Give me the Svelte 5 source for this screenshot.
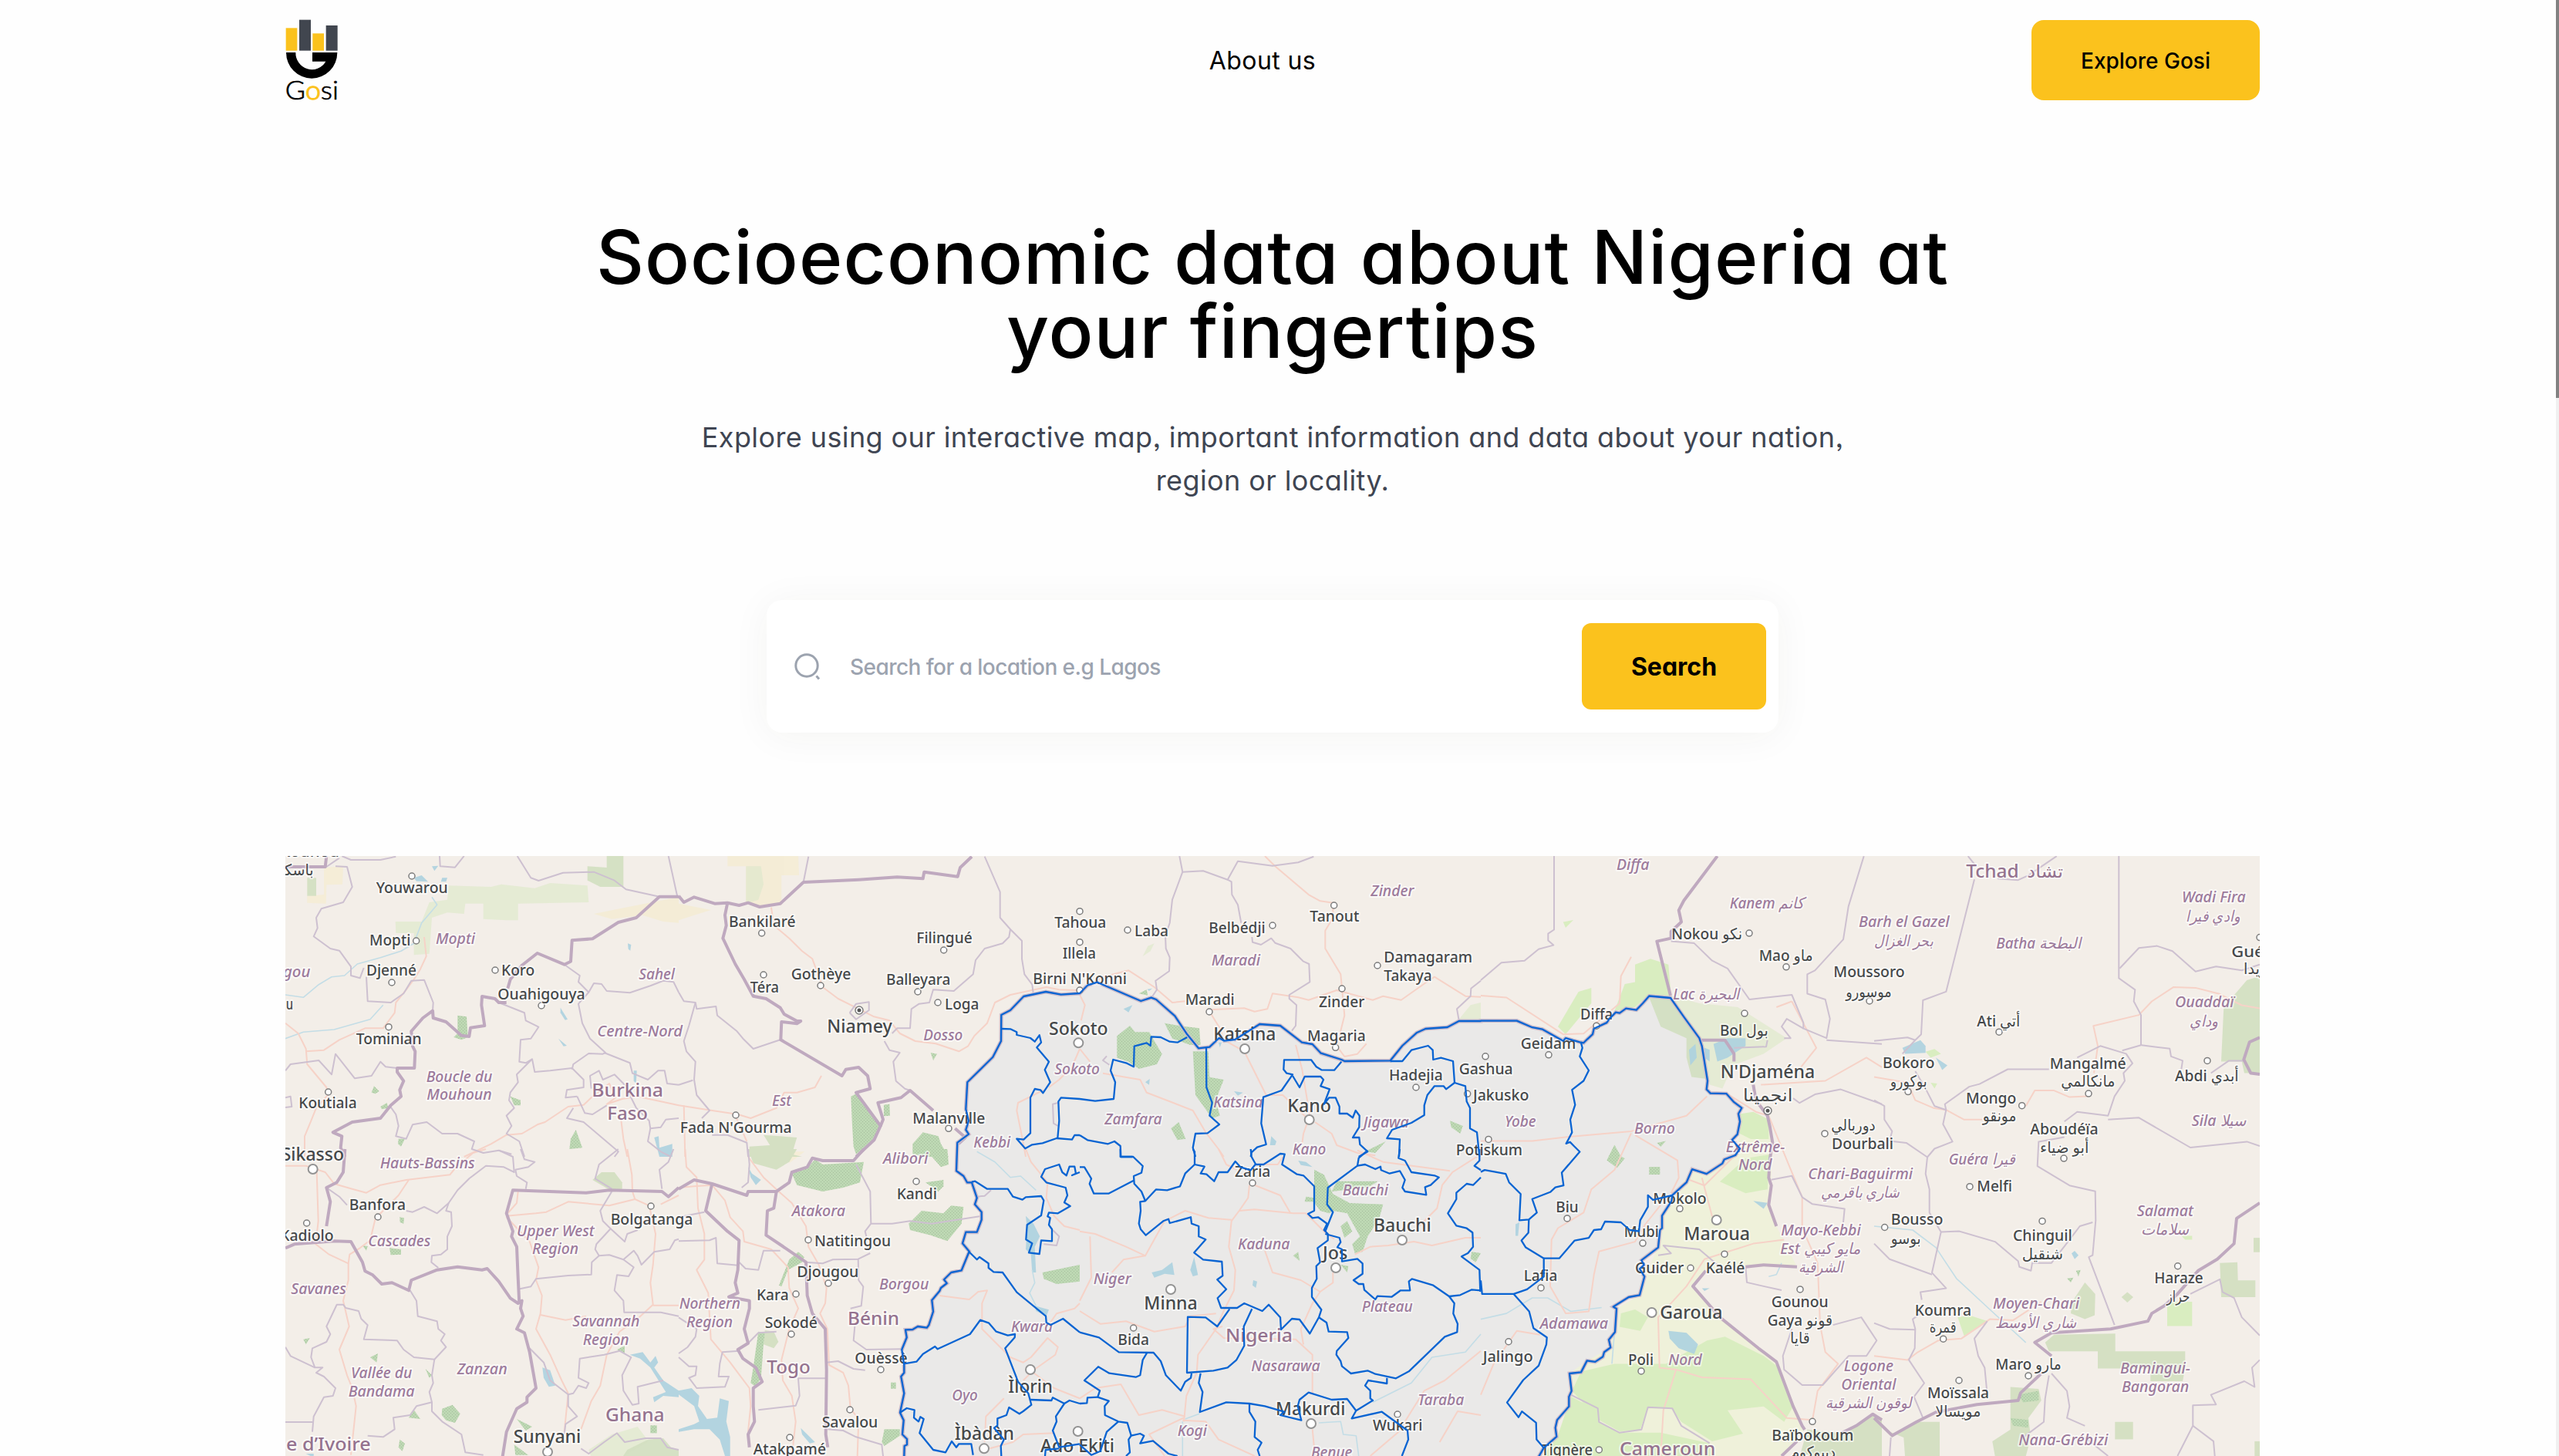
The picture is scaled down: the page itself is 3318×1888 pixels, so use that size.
<script>
  // every tile keeps its own grid: [x, y] is its origin on the page,
  // [sx, sy] the size of one grid unit
  const tiles = [
    {
      x: 360, y: 1100, sx: 1 / 3, sy: 1 / 3,
      sand: ["180,75 255,70 252,140 190,142 188,215 115,212 115,185 180,180", "1230,255 1330,235 1395,222 1560,190 1560,290 1500,285 1420,260 1300,275"],
      meadow: ["665,145 830,150 870,140 1000,155 1060,135 1205,145 1210,210 935,215 935,280 890,280 800,275 800,215 730,215 725,255 660,250 600,270 590,410 530,415 530,330 460,330 458,285 560,285 590,210 660,200"],
      park: ["115,115 150,115 150,185 115,185", "1205,70 1280,75 1280,30 1345,30 1345,150 1255,150 1205,125"],
      forest: ["700,650 735,655 740,735 715,745 685,735 700,720", "905,965 945,980 945,1000 920,1000", "1160,1095 1185,1165 1135,1170 1140,1130", "470,1130 495,1130 480,1160 468,1150", "400,1005 425,990 430,1010 405,1015", "365,950 375,925 395,945 380,955"],
      lakes: ["530,115 560,105 585,130 540,128", "600,70 625,68 610,88", "640,115 660,115 655,130 635,130", "1362,370 1375,375 1372,398 1364,392", "1100,620 1128,665 1118,668 1100,640", "1092,740 1125,768 1112,770", "1385,865 1397,865 1394,915 1385,905", "1465,1125 1482,1120 1485,1165 1535,1150 1535,1200 1485,1200"],
      rivers: ["30,570 100,580 160,530 210,500 260,495 310,450 400,425 480,400 530,370 560,290 620,220 600,190", "30,740 100,715 220,705 360,665 410,610"],
      roads: ["30,680 80,720 110,780 115,840 190,930 195,960 150,1010 130,1060 105,1120 105,1200", "110,790 180,785 240,745 340,700 410,700 455,640 460,600 500,550 530,510 555,470 578,420 570,345", "725,1200 830,1150 890,1115 950,1110 1010,1075 1040,1065 1130,1005 1190,998 1225,965 1290,915 1315,970 1280,995 1340,975 1400,965 1560,1000", "1335,1050 1345,1130 1360,1200"],
      regions: ["250,30 285,45 400,45 460,32", "225,70 270,72 290,150 255,210 170,235 150,270 155,310 140,343 205,390 240,398 285,460 285,495 320,505 335,465", "185,75 240,38", "630,30 632,70 690,74 725,30", "932,30 985,115 1015,126 1110,95 1230,92 1310,125 1355,160 1485,188", "1520,30 1555,188", "345,500 350,595 440,600 490,565 520,515 570,512 605,600 603,632", "1115,452 1175,495 1170,520 1210,560 1230,525 1260,528 1280,555 1370,562 1450,535 1500,515 1540,520 1560,560", "1210,560 1170,605 1185,680 1215,740 1275,795 1265,800 1210,798 1150,840 1145,860", "860,600 960,640 965,670 1015,695 985,740 945,745 940,830 965,835 990,820 1000,870 1060,865 1145,855 1190,900 1190,930 1125,940 1120,970 1165,965", "990,820 930,880 935,910 905,950 900,980 920,1010 890,1040 910,1080 890,1110 940,1140 960,1200", "30,865 50,840 160,825 210,880 225,800 300,895 365,885 400,830 420,850 465,855", "1270,795 1370,835 1380,875 1440,900 1480,865 1505,865 1515,915 1560,920", "1220,935 1215,885 1250,865 1265,900 1310,880 1360,930", "1165,965 1195,1030 1225,1035 1280,1000", "1150,1010 1125,1050 1190,1065 1325,1180 1310,1200", "1360,940 1395,1010 1445,1060 1450,1090 1490,1085 1510,1055 1560,1050", "1450,1090 1440,1140 1490,1180 1530,1200", "435,1000 460,1035 470,1080 460,1120 500,1130 525,1075 580,1065 640,1110 700,1110 765,1140 755,1170 800,1185 860,1175 910,1190", "30,970 50,965 55,1005 30,1008"],
      borders: ["1560,188 1485,188 1395,270 1325,288 1225,352 1145,358 1140,440 1115,452 1010,408 950,455 905,510 895,545", "890,600 860,600 845,585 795,576 793,610 805,690 750,698 745,732 715,728 655,675 605,660 603,632 565,660 520,712 525,770 535,790 532,855 465,855 465,870 490,905 475,940 480,965 440,1000 400,1050 290,1065 215,1105 250,1120 245,1165 262,1200", "30,72 185,72 190,30"],
      labels: [
        ["Kounou", 10, 240, 34, "town"], ["باسكـ", 10, 140, 105, "town"],
        ["Youwarou", 383, 662, 173, "town"], ["Mopti", 357, 517, 378, "town"], ["Djenné", 345, 540, 496, "town"],
        ["Koro", 870, 1000, 496, "town"], ["Ouahigouya", 856, 1196, 588, "town"], ["u", 32, 60, 628, "town"],
        ["Tominian", 305, 560, 762, "town"], ["Koutiala", 82, 308, 1012, "town"],
        ["Mopti", 615, 768, 372, "region"], ["Ségou", -42, 127, 502, "region"], ["Sahel", 1405, 1545, 510, "region"],
        ["Centre-Nord", 1243, 1575, 732, "region"], ["Boucle du", 578, 835, 908, "region"], ["Mouhoun", 580, 833, 977, "region"],
        ["Burkina", 1222, 1500, 965, "country"], ["Faso", 1282, 1440, 1055, "country"],
      ],
      dots: [[522, 108], [539, 360], [444, 522], [846, 474], [1026, 612], [432, 695], [197, 948]],
    },
    {
      x: 360, y: 1490, sx: 1 / 3, sy: 1 / 3,
      meadow: ["1210,1170 1300,1110 1400,1080 1430,1120 1440,1140 1370,1180 1340,1200 1220,1200"],
      park: ["1225,120 1260,90 1310,90 1340,130 1340,155 1290,158", "1360,1170 1440,1130 1500,1125 1530,1160 1560,1170 1560,1200 1340,1200"],
      forest: ["435,385 480,390 480,410 440,412", "330,375 350,378 345,395", "100,740 125,735 110,760", "360,810 390,795 385,830", "640,1010 680,995 710,1030 690,1065 655,1055 638,1035", "510,1045 530,1015 555,1050", "475,1130 495,1145 485,1175 470,1160", "575,855 600,880 590,890", "1320,780 1350,765 1350,795", "930,1050 990,1080 965,1095", "920,1150 975,1190 925,1190", "1450,1075 1475,1075 1475,1105 1450,1105", "475,265 492,268 490,290 476,285"],
      lakes: ["1030,850 1060,860 1080,920 1055,925 1035,890", "1370,800 1420,790 1450,830 1470,805 1480,830 1465,850 1500,900 1560,940 1560,965 1500,960 1465,985 1460,965 1510,945 1450,850 1410,815", "110,1185 140,1185 140,1200"],
      roads: ["30,65 110,65 185,90 220,135 290,155 345,170 400,140 500,120 670,100 690,75 760,15 810,0", "152,90 158,280 148,370 200,410 275,445 280,410 320,385 360,355 380,270 470,180 510,120", "275,445 275,510 255,590 278,690 240,780 270,880 290,930 305,1000 285,1190", "1360,0 1378,100 1380,165 1390,195 1445,220", "890,260 1005,250 1045,245 1130,205 1290,220 1390,195", "890,265 980,360 1015,460 1005,510 1028,570 1022,640 1005,700 1060,800 1105,900 1130,950 1115,1100", "1022,645 1120,665 1200,650", "1445,220 1470,330 1460,450 1450,520 1460,605 1400,660 1330,710 1280,800 1255,920 1220,980 1180,1090", "1460,608 1560,608", "1490,215 1560,180", "935,165 930,210 895,250"],
      regions: ["190,150 240,185 270,218", "500,240 525,245 570,225 620,250 665,210 700,160 745,115 810,65 880,70 920,90 915,30 860,5", "665,210 655,240 675,245 678,300 660,340 660,390 635,410 600,415 598,440 625,462", "945,0 960,40 1000,50 975,70 925,80 930,105 970,130 965,155", "1325,0 1250,60 1235,115 1300,155", "1300,165 1255,240 1265,280 1295,310 1240,370 1235,390 1250,415 1222,440 1220,488 1130,492 1005,505 985,535 935,545", "1295,310 1350,360 1360,330 1400,315", "1250,415 1290,412 1345,430 1385,395 1400,415 1415,450 1465,400 1525,390 1545,355 1560,350", "1345,430 1385,460 1365,495 1320,490 1310,550 1345,590 1348,635 1490,635 1560,650", "1540,0 1520,50 1485,80 1495,155", "515,550 540,590 545,650 620,670 625,700 650,720 635,745 655,770 610,818 530,810 490,780 465,745 335,740 350,685 325,660 315,630 265,618 255,605 230,605 190,690 205,720 190,750 135,775 130,810 145,850 175,850 150,870 180,885 225,930 215,960 180,965 140,1040 135,1100", "30,770 50,805 145,850", "610,818 600,880 605,910 590,945 600,985 540,1000 515,1035 450,1045 455,1090 410,1120 350,1115", "600,985 600,1020 640,1060 715,1110 730,1180 800,1190", "30,1062 135,1062", "980,775 1035,830 1060,900 1130,955 1130,1000 1165,1040 1120,1070 1115,1110", "1130,955 1150,950 1170,920 1200,930 1210,910 1170,890 1175,815 1270,800 1330,785 1375,810 1340,880 1345,940 1380,995 1405,990 1400,925 1500,900", "1180,1165 1210,1185 1270,1140 1320,1105 1350,1140 1430,1125 1490,1125 1515,1160 1560,1170"],
      borders: ["262,0 255,90 230,130 190,150 205,205 190,300", "30,385 65,370 220,358 285,360 330,440 340,475 370,490 405,525 445,520 510,550 520,510 620,470 700,458 795,470 815,465 860,515 905,580 935,600 950,590 945,620 955,650 930,700 960,715 980,790 1005,930 970,965 970,985 930,1010 890,1100 875,1195", "940,600 935,500 930,380 910,340 915,320 890,250 915,160 1200,170 1290,160 1495,165 1520,185 1560,150"],
      labels: [
        ["Sikasso", 14, 258, 45, "city"], ["Kadiolo", 10, 218, 358, "town"], ["Banfora", 278, 498, 238, "town"],
        ["Bolgatanga", 1295, 1615, 294, "town"], ["Sunyani", 917, 1180, 1143, "city"],
        ["Hauts-Bassins", 398, 767, 75, "region"], ["Cascades", 352, 595, 377, "region"], ["Upper West", 930, 1232, 338, "region"],
        ["Region", 990, 1170, 408, "region"], ["Savanes", 52, 267, 563, "region"], ["Vallée du", 285, 523, 890, "region"],
        ["Bandama", 275, 533, 962, "region"], ["Zanzan", 698, 893, 876, "region"], ["Savannah", 1147, 1408, 690, "region"],
        ["Region", 1187, 1367, 762, "region"], ["Ghana", 1275, 1505, 1060, "country"], ["e d’Ivoire", 33, 362, 1172, "country"],
      ],
      dots: [[137, 78, 6], [113, 288], [390, 264], [1452, 222], [1050, 1178, 6]],
    },
    {
      x: 880, y: 1100, sx: 1 / 3, sy: 1 / 3,
      sand: ["190,30 465,30 468,105 400,105 400,220 320,225 262,215 262,70 190,70", "0,215 125,240 60,260 0,280"],
      meadow: ["262,70 320,70 330,140 310,200 262,215"],
      park: ["330,1115 460,1125 440,1190 480,1200 275,1200 275,1160 355,1155"],
      forest: ["670,965 690,955 785,1080 750,1140 690,1190 680,1160 675,1080", "798,998 820,995 822,1040 798,1042", "910,1150 950,1105 1010,1120 1020,1150 1050,1200 960,1200 910,1190", "980,795 1005,800 990,825"],
      roads: ["360,230 370,300 430,350 480,400 520,430 560,540 620,585 690,620 760,655 820,670 860,720 920,750 1000,760 1090,790 1125,770 1150,730 1200,680 1230,600 1290,570 1430,540 1480,550 1560,553", "0,1000 130,1020 230,1035 280,1050 380,1010 410,950 460,950 530,930 555,885", "20,1000 25,1200", "225,1050 265,1140", "1420,940 1320,990 1315,1020 1335,1120 1350,1200", "1560,780 1530,850 1480,900 1440,930"],
      regions: ["505,32 485,132", "1190,32 1250,170 1250,270 1290,315 1285,345 1260,370 1190,390 1155,435 1145,490 1070,555 990,550 975,600 935,605 905,625 900,700 850,700 830,720", "1290,315 1335,360 1335,430 1345,490 1375,530 1380,570", "0,560 20,595 65,600 70,625 145,615 150,650 225,710 250,740 290,780 395,745", "65,600 40,690 20,750 30,790 65,830 60,900 70,960 120,1020 90,1050", "0,920 55,902", "800,750 820,785 860,795 835,830 845,905 880,935 900,942", "665,640 690,605 740,598 740,630 690,665 665,640", "130,1115 190,1115 265,1145 270,1200", "1475,990 1455,995 1458,1070 1475,1080"],
      borders: ["0,185 20,210 60,190 140,215 190,212 235,222 270,212 315,228 395,215 485,132 700,122 850,112 950,118 955,92 1085,110 1095,75 1140,32", "190,212 180,260 185,300 172,350 220,450 255,510 290,575 340,585 395,620 410,645 460,672 475,672 460,682 400,675 397,745 635,885 650,860 700,852 735,885 745,935 690,950 785,1080 760,1135 690,1200", "785,1080 795,1055 775,990 865,970 900,942 990,1020", "1075,1090 1115,1125 1088,1150"],
      labels: [
        ["Bankilaré", 195, 455, 305, "town"], ["Téra", 278, 390, 562, "town"], ["Gothèye", 437, 670, 510, "town"],
        ["Filingué", 925, 1142, 370, "town"], ["Balleyara", 807, 1057, 530, "town"], ["Loga", 1035, 1168, 627, "town"],
        ["Niamey", 577, 830, 718, "city"], ["Tahoua", 1462, 1663, 308, "town"], ["Illela", 1493, 1623, 430, "town"],
        ["Birni N'Konni", 1378, 1743, 528, "town"], ["Sokoto", 1440, 1670, 725, "city"], ["Malanville", 910, 1192, 1070, "town"],
        ["Fada N'Gourma", 5, 440, 1107, "town"], ["Dosso", 952, 1105, 748, "region"], ["Est", 363, 438, 1003, "region"],
        ["Kebbi", 1147, 1290, 1165, "region"], ["Sokoto", 1462, 1638, 880, "region"],
      ],
      dots: [[323, 330], [330, 492], [552, 534], [1031, 396], [930, 558], [1008, 600], [702, 630, 5, true], [1050, 1090], [222, 1038], [1560, 245], [1560, 365], [1560, 552], [1555, 757, 6]],
      states: ["1255,702 1290,703 1315,715 1315,726 1368,738 1385,752 1403,727 1410,755 1393,775 1440,830 1424,862 1445,910 1417,952 1407,940 1385,936 1368,970 1368,1108 1342,1133 1315,1130 1348,1168 1375,1153 1415,1147 1470,1128 1530,1133 1540,1116 1560,1116", "1560,975 1487,970 1477,985 1480,1060 1474,1128"],
    },
    {
      x: 880, y: 1490, sx: 1 / 3, sy: 1 / 3,
      sand: ["430,10 490,10 430,55"],
      park: ["335,705 370,710 388,750 370,775 330,760", "270,0 460,0 430,50 380,80 290,55"],
      forest: ["440,95 500,75 530,40 560,60 720,50 705,130 640,150 560,165 460,140", "910,0 1045,0 1050,60 1020,70 985,30 915,15", "960,130 1030,120 1030,145 1010,165", "895,290 945,240 1030,250 1060,220 1108,225 1100,290 1045,358 980,335 900,315", "430,430 465,400 488,420 480,440 425,470 400,535 390,530", "310,710 335,715 330,760 320,890 300,925 280,910 290,850", "1415,480 1560,450 1560,515 1470,525 1420,505", "800,1090 860,1090 860,1115 800,1155 790,1140", "825,908 845,908 845,932 825,932"],
      lakes: ["0,940 50,930 80,960 75,1000 110,1050 150,1045 160,970 195,980 185,1060 200,1120 200,1194 180,1194 160,1130 120,1090 60,1090 0,1100 0,1090 60,1070 80,1060 60,1000 0,955", "1350,260 1380,290 1405,340 1385,380 1390,480 1375,480 1370,410 1350,390 1355,310", "270,70 285,95 320,120 300,140 280,110", "475,1085 500,1110 530,1140 510,1145 480,1110", "1385,610 1440,625 1430,650 1390,630"],
      rivers: ["1375,470 1385,520 1365,560 1390,610", "1160,10 1230,50 1290,110 1330,105 1390,160"],
      roads: ["25,0 30,70 70,110 75,230 100,330 100,430 70,470 115,560 125,740 200,830 275,930 280,1000 270,1100", "130,140 180,200 200,265 250,320 255,360 360,390 425,460 430,540 465,620 430,700 400,820 405,900 440,960 455,1060 440,1194", "270,30 330,110 395,170 440,210 495,300 505,380 545,450 575,540 570,600 550,640 578,700 585,840 640,870 660,920 668,1010 700,1050 695,1194", "0,150 60,145 130,140", "1350,0 1370,50 1435,130 1430,190 1460,260 1500,300 1560,315", "1015,570 1130,585 1165,555 1200,550 1180,600 1180,700 1230,750 1290,810 1340,830 1370,810 1435,735 1475,770 1465,800 1380,860 1340,900", "1435,690 1470,640 1540,620 1560,600", "1190,1140 1195,1040 1265,970", "1210,1165 1300,1140 1340,1110 1460,1105", "1380,870 1460,930 1560,970"],
      regions: ["690,60 745,165 748,290 725,320 730,340", "748,290 830,290 900,280 985,290 1170,262", "495,440 560,445 600,430 698,428 745,405", "698,428 700,510 718,535 710,610 668,620", "685,690 680,745 730,780 870,778", "575,830 620,825 680,855 725,860", "570,892 465,892 470,960 455,998 310,1015", "580,1090 640,1095 690,1120 790,1150 795,1194", "0,358 120,355 145,345 150,445 230,452", "235,440 260,465 310,470 330,395 395,395", "0,655 70,700 65,730 35,770 0,795", "0,810 40,845 70,845 65,880 40,890 70,930 180,925 195,885 155,885 160,835 170,790 235,785", "270,755 310,715 380,710", "270,0 275,60 270,130 245,150", "0,265 100,245", "1160,185 1190,182 1215,160", "1455,315 1480,340 1470,375 1420,370"],
      borders: ["720,0 680,45 560,45 520,35 500,70 440,90 430,130 380,165 270,165 265,180 130,135 60,120 0,155", "380,165 370,230 345,240 340,335 400,375 495,440 500,570 520,640 570,700 575,860 572,1110 580,1160", "130,135 105,240 190,320 235,355 230,470 220,520 230,560 195,575 275,590 275,620 255,700 270,755 230,780 250,815 300,850 325,905 290,930 290,1000 295,1060 270,1110 275,1160"],
      labels: [
        ["Kandi", 848, 1005, 195, "town"], ["Natitingou", 528, 825, 378, "town"], ["Djougou", 460, 700, 497, "town"],
        ["Kara", 303, 428, 587, "town"], ["Sokodé", 335, 540, 697, "town"], ["Ouèssè", 685, 890, 833, "town"],
        ["Savalou", 557, 775, 1082, "town"], ["Atakpamé", 290, 573, 1188, "town"], ["Ìlọrin", 1282, 1455, 948, "city"],
        ["Ìbàdàn", 1073, 1305, 1132, "city"], ["Ado Ekiti", 1407, 1695, 1180, "city"], ["Alibori", 795, 970, 58, "region"],
        ["Atakora", 440, 648, 262, "region"], ["Borgou", 780, 973, 545, "region"], ["Kwara", 1293, 1455, 712, "region"],
        ["Oyo", 1063, 1163, 977, "region"], ["Northern", 2, 240, 622, "region"], ["Region", 30, 210, 692, "region"],
        ["Bénin", 657, 858, 683, "country"], ["Togo", 343, 512, 873, "country"],
      ],
      dots: [[924, 126], [504, 353], [582, 522], [456, 564], [438, 720], [786, 858], [666, 1014], [432, 1122], [1368, 858, 6], [1188, 1165, 6], [1553, 1098, 6]],
      states: ["1140,128 1153,125 1200,155 1280,155 1300,185 1337,197 1350,187 1410,183 1420,200 1410,258 1355,295 1351,352 1375,367 1362,403 1403,408 1410,355 1452,358 1452,312 1440,295 1445,268 1435,262 1440,247 1475,250 1523,222 1500,208 1512,180 1505,150 1430,130 1410,108 1425,78 1480,60 1492,90 1508,103 1520,68 1540,68 1545,95 1530,102 1560,90", "1128,398 1160,430 1170,420 1205,445 1205,462 1225,478 1260,480 1315,557 1428,650 1430,675 1447,684 1495,660 1560,713", "877,835 925,827 950,797 997,768 1007,778 1133,720 1173,665 1207,677 1235,710 1280,725 1308,720 1307,733 1270,775 1320,905 1360,950 1372,995 1340,1020 1325,1030 1285,1005 1275,1035 1240,1048 1240,1075 1227,1085 1265,1130 1253,1155 1255,1194", "1368,975 1450,978 1455,967 1500,990 1520,978 1560,990", "1500,990 1467,1040 1470,1060 1455,1095 1480,1160 1560,1147", "1480,1165 1427,1170 1425,1194", "861,1025 887,1008 917,1015 915,1045 933,1060 940,1042 953,1050 937,1105 990,1170 1038,1180 1062,1137 1080,1160 1090,1147 1138,1147 1145,1190"],
    },
    {
      x: 1400, y: 1100, sx: 1 / 3, sy: 1 / 3,
      meadow: ["245,420 265,380 290,370 275,400", "1475,665 1520,610 1560,600 1560,665"],
      forest: ["145,730 195,690 215,715 270,715 320,800 300,840 230,858 190,830 145,815", "330,680 385,690 465,700 470,765 430,765 360,740", "440,790 500,790 505,890 560,900 540,950 530,985 545,1040 515,1050 450,960", "355,1090 385,1065 412,1130 380,1135", "230,565 260,550 265,572", "1110,1180 1190,1140 1150,1185", "1440,1060 1490,1080 1480,1110 1445,1085"],
      lakes: ["170,625 205,610 190,638", "255,910 272,897 270,920", "600,945 635,950 615,962", "745,1120 765,1140 760,1155 740,1155", "262,548 282,545 270,555", "540,755 552,755 545,775"],
      roads: ["720,30 760,70 890,180 935,205 985,212 985,270 955,320 955,390 1015,490 1020,545 1030,650 1000,770 1030,810 1080,800 1115,760", "0,553 90,500 190,475 290,540 360,600 410,595", "505,628 640,622 680,635 730,625 750,565 850,580 890,590 1000,552 1140,590 1180,575 1250,590 1350,520 1380,500 1500,575 1560,578", "505,635 545,700 560,745 640,790 680,870 725,960 790,960 890,1055", "0,780 40,830", "90,875 235,900 260,950 350,985 440,1020 490,1105 540,1170 560,1200", "840,765 865,860 895,1040 870,1110 865,1150", "915,1065 980,1110 1000,1155 1080,1185 1150,1195", "0,570 20,610 5,670"],
      regions: ["388,30 400,92 480,88 575,122 615,50 750,68 850,55 910,32", "400,92 360,200 350,290 333,340 335,390 350,425 348,478 295,515 300,550 280,580", "575,122 590,130 592,180 615,220 628,290", "670,345 672,365 705,375 745,350 760,368 820,390 870,440 892,450 895,520 815,570 815,585 843,610 840,690 825,710", "1560,515 1522,545 1520,575 1467,625 1475,670", "105,808 90,825 115,842"],
      labels: [
        ["Laba", 213, 345, 342, "town"], ["Belbédji", 502, 722, 330, "town"], ["Tanout", 895, 1087, 286, "town"],
        ["Damagaram", 1183, 1527, 443, "town"], ["Takaya", 1183, 1370, 515, "town"], ["Maradi", 410, 602, 608, "town"],
        ["Zinder", 930, 1108, 618, "town"], ["Magaria", 885, 1112, 750, "town"], ["Katsina", 520, 763, 748, "city"],
        ["Hadejia", 1203, 1412, 903, "town"], ["Kano", 808, 978, 1025, "city"], ["Gashua", 1475, 1685, 880, "town"],
        ["Jakusko", 1530, 1747, 980, "town"], ["Potiskum", 1463, 1722, 1195, "town"], ["Zinder", 1132, 1300, 185, "region"],
        ["Maradi", 512, 702, 455, "region"], ["Zamfara", 97, 320, 1075, "region"], ["Katsina", 520, 712, 1008, "region"],
        ["Jigawa", 1103, 1280, 1085, "region"], ["Kano", 827, 958, 1190, "region"],
      ],
      dots: [[186, 318], [750, 300], [989, 222], [1158, 456], [504, 636], [1020, 546], [995, 775], [1308, 930], [642, 780, 6], [893, 1056, 6], [1508, 955]],
      states: ["0,1116 30,1135 110,1150 135,1140 158,1158 160,1200 205,1200", "450,1200 440,1165 450,1110 497,1108 543,1074 505,1040 515,990 493,930 492,776", "418,735 380,755 350,752 315,735 278,733 275,768 260,757 212,770 210,850 180,835 130,822 120,865 138,910 132,975 60,983 0,975", "665,1200 668,1183 690,1163 725,1152 706,1070 714,968 785,942 828,880 805,875 793,860 795,823 900,823 920,850 940,862 990,863 1018,830", "828,885 855,930 875,888 937,888 948,900 937,925 972,937 950,995 970,970 995,970 1010,1005 1010,1032 1040,1032 1062,1048 1073,1020 1088,1040 1087,1085 1062,1125 1087,1125 1090,1152 1120,1180 1085,1200", "1242,1200 1245,1132 1195,1128 1215,1095 1290,1068 1340,1038 1340,1000 1352,960 1380,925 1415,925 1425,937 1458,912 1500,925 1505,985 1518,1010 1518,1090 1545,1105 1555,1200", "1458,912 1452,828 1405,815 1375,822 1373,785 1355,768 1290,785 1255,828 1208,828"],
    },
    {
      x: 1400, y: 1490, sx: 1 / 3, sy: 1 / 3,
      forest: ["912,80 950,100 985,175 1050,210 1180,215 1165,270 1120,340 1100,400 1070,405 1060,370 1090,340 1040,250 985,240 970,250 935,240 910,205 875,205 880,185 912,190", "1015,300 1040,280 1060,320 1030,345", "1000,125 1160,125 1120,150 980,165", "830,415 850,400 855,435", "1015,450 1045,455 1040,480", "1525,400 1560,405 1540,440 1520,425"],
      lakes: ["280,480 320,470 360,440 368,490 330,485 290,500", "430,470 445,420 460,490 440,495", "675,510 690,515 685,540 672,530", "850,45 880,50 905,70 860,62"],
      rivers: ["1140,985 1290,910 1370,810 1500,790 1560,720", "410,1050 465,1030", "400,1060 400,1194", "930,1065 1015,1060 1025,1110 1075,1115 1085,1194"],
      roads: ["660,140 655,190 620,240 590,280 580,380 605,470 600,550 555,640 530,700 460,800 455,870 415,960 405,1060", "680,140 780,180 820,250", "620,240 680,235 830,250 880,250 960,330 990,350", "590,275 500,268 410,240 330,280 255,415 180,380 60,330 0,320", "40,340 45,500 0,590", "255,415 170,430 125,480", "0,630 80,680 180,670 290,710 410,690 430,650 530,640", "555,690 520,700 560,735 840,740 905,800 905,950", "720,395 750,480 860,510 935,555 985,520 985,480", "935,555 905,600 860,700 870,760", "1070,410 1130,380 1200,375 1300,360 1370,375 1500,345 1560,345", "1320,300 1390,230 1410,140 1450,90 1560,20", "1080,5 1180,50 1440,85", "0,970 60,930 160,915 230,1035 320,1015 410,1040", "405,1045 270,1110 330,1194", "400,1055 490,1060 540,1130 680,1194", "905,1090 915,1194", "1130,1194 1240,1100 1340,940 1420,900 1560,785", "1400,1140 1470,1020 1560,1035", "700,60 770,60 790,30", "540,0 570,60 610,80"],
      labels: [
        ["Zaria", 603, 742, 107, "town"], ["Bauchi", 1143, 1367, 320, "city"], ["Jos", 945, 1042, 430, "city"],
        ["Minna", 250, 458, 625, "city"], ["Bida", 148, 270, 763, "town"], ["Makurdi", 762, 1033, 1035, "city"],
        ["Wukari", 1140, 1333, 1095, "town"], ["Bauchi", 1022, 1200, 180, "region"], ["Kaduna", 615, 817, 390, "region"],
        ["Niger", 53, 200, 525, "region"], ["Plateau", 1097, 1295, 633, "region"], ["Nasarawa", 667, 935, 865, "region"],
        ["Taraba", 1315, 1495, 997, "region"], ["Kogi", 380, 495, 1115, "region"], ["Benue", 900, 1060, 1200, "region"],
        ["Nigeria", 567, 828, 750, "country"],
      ],
      dots: [[672, 132], [1254, 354, 6], [996, 462, 6], [354, 546, 6], [209, 696], [900, 1068, 6], [1236, 1032]],
      states: ["0,70 18,70 45,115 38,135 55,173 112,173 210,122", "158,0 158,30 208,30 245,66 240,92 210,105 212,135 240,165 255,202 235,205 237,240 230,290 237,312 257,335 325,280 345,272 350,288 432,265 435,290 463,300 463,340 490,352 445,403 480,430 553,438 556,493 535,508 570,545 536,580 550,618 612,618 640,600 710,630 735,605 780,655 783,702 825,660 855,663 895,718 930,655 940,625 903,575 903,540 922,505 920,455 935,440 925,385 965,355 965,330 950,315 962,290 927,265 905,268 888,252 912,240 912,145 870,103 845,98 787,60 797,20 780,18 715,60 683,60 665,82 625,70 605,48 575,90 540,90 523,125 493,98 470,95 485,68 447,60 447,10 440,0", "447,60 410,95 390,145 340,160 297,157 255,202", "665,0 668,30 685,60", "1120,5 1085,35 1080,65 965,150 962,215 985,245 955,320", "1080,65 1110,60 1150,78 1170,68 1172,82 1205,95 1245,85 1265,120 1255,150 1265,165 1348,178 1343,148 1365,140 1397,110 1380,103 1290,90 1265,45 1240,35 1245,0", "1555,0 1555,45 1535,65 1560,82", "1560,110 1530,140 1505,135 1465,170 1465,195 1432,250 1465,298 1505,308 1528,325 1530,380 1510,405 1485,418 1555,470 1558,555", "955,330 1010,345 1015,362 1002,382 1020,390 1020,437 1080,427 1100,445 1100,485 1065,510 1085,525 1103,525 1107,548 1150,585 1158,572 1213,575 1248,550 1285,550 1280,515 1292,505 1375,530 1437,573 1480,568 1525,547 1560,550", "1437,573 1457,600 1453,640 1470,680 1468,712 1420,730 1280,865 1230,892 1150,875 1120,862 1055,873 1020,845 1015,825 998,800 1000,785 1045,735 1040,712 968,710 960,675 930,655", "1195,890 1195,912 1122,900 1110,920 1130,940 1130,970 1140,978 1075,1018 1058,1048 1175,1022 1275,1095 1278,1130 1253,1194", "1075,1018 1040,972 980,975 890,947 855,975 848,1000 862,1055 780,1035 795,1022 720,1000 660,990 570,985 467,1023 478,945 463,910 470,872", "660,990 660,1022 683,1060 680,1120 707,1142 692,1170 700,1194", "583,622 535,690 490,655 420,653 417,870 520,862 575,850 610,820 640,765 638,690 670,622", "0,713 75,733 152,790 287,792 315,825 335,880 393,940 410,905 432,890 435,872", "262,792 245,820 235,880 218,887 115,872 72,847 18,900 78,940 70,965 113,980 97,1000 98,1035 150,1060 185,1065 200,1115 235,1107 250,1115 235,1145 285,1135 345,1185 380,1194", "70,965 30,967 28,988 0,990", "150,1060 105,1100 80,1175 45,1190 0,1150", "200,1115 190,1130 195,1180 180,1194"],
    },
    {
      x: 1920, y: 1100, sx: 1 / 3, sy: 0.50255,
      savanna: ["822,830 878,840 1000,790 1010,690 1060,680 1120,700 1135,760 1125,920 1150,975 1230,1080 1030,1080 875,1090 825,1130 930,1210 1080,1290 1150,1325 1260,1500 1170,1570 225,1570 295,1518 343,1440 345,1355 413,1322 505,1288 528,1188 618,1153 637,1105 690,1030 705,948 745,895"],
      meadow: ["740,380 850,400 1000,410 1190,490 1100,530 980,560 940,620 890,610 860,510 790,435"],
      grass: ["600,300 660,285 730,300 740,380 650,380 600,410 520,420 560,350 600,345", "300,460 380,370 430,360 430,400 330,480", "320,190 360,185 330,205", "1010,685 1060,680 1120,700 1120,750 1050,750 1005,735", "930,860 1030,800 1125,790 1115,880 1030,890", "545,1200 600,1190 650,1210 620,1245 540,1235", "355,1400 390,1350 520,1330 720,1330 880,1270 950,1260 1100,1310 1160,1340 1215,1440 1180,1480 1100,1440 960,1450 1020,1510 900,1530 780,1480 740,1445 650,1445 620,1500 540,1505 460,1475", "350,1415 455,1450 460,1480 540,1508 700,1508 890,1535 900,1570 240,1570 300,1515"],
      park: ["655,385 738,386 855,500 880,595 820,590 800,540 800,490 700,460", "1270,1500 1420,1510 1525,1460 1560,1470 1560,1570 1240,1570"],
      forest: ["490,805 520,765 545,795 560,800 530,825", "655,822 697,822 697,842 655,842", "685,760 720,755 700,770"],
      lakes: ["810,520 835,505 840,540 815,560", "870,515 890,520 890,550 870,540", "905,505 960,490 1030,490 1030,510 960,540 920,550", "1060,910 1115,915 1100,930", "730,1245 800,1250 845,1280 830,1305 770,1290 735,1265", "135,970 150,965 145,1000 135,1000", "860,1135 890,1135 870,1142"],
      rivers: ["0,1215 100,1200 200,1160 260,1160 350,1195 470,1185", "520,1250 510,1330", "1170,1070 1150,1100 1120,1105"],
      roads: ["0,380 100,385 320,480 400,478 540,400 545,330 585,280", "0,755 200,755 330,745 585,730 800,690 880,640", "585,735 520,830 430,880 400,940 300,980 275,1010 270,1130 330,1200 420,1195 440,1100 460,1040 600,1015 640,970 700,920", "600,740 765,805 770,850 740,890", "950,630 1070,680 1120,690 1200,820 1250,900 1250,980 1310,1070 1320,1230 1340,1300 1390,1330 1310,1400 1290,1475 1190,1470 1050,1370 860,1365 760,1345 695,1340 690,1210 800,1130 870,1060 1060,1020 1180,1010", "810,855 870,870 1000,785", "860,850 900,950", "1090,610 1340,600 1500,540 1560,565", "1210,395 1305,515 1245,565", "760,1345 710,1450 700,1568", "1150,410 1210,395", "0,1410 50,1330 140,1245 230,1255"],
      regions: ["285,20 285,210 262,220 262,238 283,250 225,260 170,290 80,295 0,340", "740,240 830,245 900,290 960,310 1045,390 1210,378 1255,450 1255,465 1345,490 1358,440 1340,390 1270,375 1270,325 1300,315 1410,235 1430,150 1490,20", "1255,465 1190,440 1170,460 1205,490 1180,490", "985,515 1110,512 1115,495", "1345,495 1560,505", "1215,645 1240,657 1300,635 1400,622 1560,660", "1130,855 1210,845 1250,900 1290,918 1415,930 1410,965", "690,1050 740,1045 710,1025 850,1035 930,1080", "1030,1080 1035,1120 1100,1130 1170,1140", "1370,1230 1480,1210 1540,1270 1500,1310 1430,1310 1330,1385 1250,1385 1180,1345 1175,1310 1210,1240", "350,1410 455,1445 460,1480 540,1508 625,1500 650,1442 745,1445 780,1490 890,1535"],
      borders: ["920,20 790,135 770,160 780,190 740,215 740,232 685,240 738,380", "850,495 950,495 985,530 985,550", "1060,610 1070,650 1115,690 1125,720 1135,760 1125,800 1120,850 1130,870 1120,920 1150,975", "1230,1080 1100,1075 1030,1080", "875,1090 825,1130 930,1210 1080,1290 1150,1325 1215,1440 1250,1490 1260,1500", "1230,1530 1170,1568", "1400,1510 1460,1490 1525,1460 1560,1475"],
      labels: [
        ["Diffa", 387, 513, 442, "town"], ["Geidam", 155, 370, 518, "town"], ["Biu", 292, 380, 940, "town"],
        ["Mokolo", 670, 878, 917, "town"], ["Mubi", 557, 692, 1003, "town"], ["Lafia", 167, 298, 1117, "town"],
        ["Guider", 600, 790, 1096, "town"], ["Maroua", 790, 1047, 1010, "city"], ["Kaélé", 875, 1027, 1096, "town"],
        ["Garoua", 697, 940, 1213, "city"], ["Poli", 573, 672, 1333, "town"], ["Jalingo", 8, 203, 1325, "town"],
        ["Tignère", 235, 435, 1566, "town"], ["Baïbokoum", 1132, 1450, 1528, "town"], ["Nokou نكو", 742, 1017, 235, "town"],
        ["Mao ماو", 1082, 1292, 290, "town"], ["Bol بول", 930, 1118, 484, "town"], ["N'Djaména", 932, 1300, 592, "city"],
        ["انجمينا", 1020, 1213, 652, "city"], ["دوربالي", 1363, 1535, 728, "town"], ["Dourbali", 1365, 1605, 776, "town"],
        ["Gounou", 1130, 1352, 1184, "town"], ["Gaya قونو", 1115, 1368, 1232, "town"], ["قايا", 1203, 1280, 1278, "town"],
        ["Moussoro", 1372, 1649, 332, "town"], ["موسورو", 1420, 1598, 385, "town"], ["ديبوكوم", 1205, 1380, 1572, "town"],
        ["Diffa", 528, 655, 55, "region"], ["Kanem كانم", 968, 1258, 156, "region"], ["Lac البحيرة", 748, 1008, 391, "region"],
        ["Yobe", 93, 215, 718, "region"], ["Borno", 597, 755, 737, "region"], ["Extrême-", 953, 1183, 784, "region"],
        ["Nord", 1002, 1132, 829, "region"], ["Nord", 730, 860, 1334, "region"], ["Adamawa", 230, 495, 1240, "region"],
        ["Mayo-Kebbi", 1168, 1478, 998, "region"], ["Est مايو كيبي", 1165, 1478, 1047, "region"], ["الشرقية", 1235, 1412, 1094, "region"],
        ["Chari-Baguirmi", 1273, 1680, 853, "region"], ["شاري باقرمي", 1323, 1628, 902, "region"], ["Logone", 1412, 1605, 1350, "region"],
        ["Oriental", 1402, 1615, 1396, "region"], ["لوقون الشرقية", 1340, 1675, 1445, "region"], ["Barh el Gazel", 1470, 1823, 202, "region"],
        ["بحر الغزال", 1530, 1760, 252, "region"], ["Cameroun", 540, 913, 1567, "country"],
      ],
      dots: [[1044, 219], [1188, 306], [1026, 426], [450, 458], [264, 533], [18, 537], [30, 751], [336, 955], [774, 930], [630, 1019], [816, 1083], [917, 959, 6], [948, 1047], [665, 1198, 6], [234, 1134], [624, 1349], [108, 1273], [460, 1552], [1116, 677, 5, true], [1338, 736], [1242, 1138], [1290, 1479], [1512, 394]],
      states: ["390,502 395,515 385,537 420,573 400,600 355,623 367,662 348,700 355,733 332,762 347,758 362,768 385,783 315,837 322,870 290,875 270,887 200,905 218,940 187,958 150,960 155,892 110,862 97,840 15,830 0,835", "187,958 185,992 158,1012 175,1030 245,1058 245,1105 180,1138 128,1150 5,1150 0,1115", "245,1058 305,1058 365,1012 420,1005 440,985 468,983 483,963 545,965 580,985 615,988 620,960 650,925 650,895 670,907 745,895", "128,1150 188,1195 205,1238 257,1262 255,1280 225,1335 165,1372 102,1430 147,1468 160,1453 215,1482 217,1525 245,1547"],
    },
    {
      x: 2430, y: 1100, sx: 1 / 3, sy: 0.50255,
      grass: ["200,525 235,518 260,530 220,540", "325,1210 370,1205 440,1220 350,1258", "1140,1170 1237,1170 1237,1233 1140,1233", "220,605 245,607 235,620", "1195,1000 1237,1000 1237,1010 1210,1010"],
      park: ["1360,410 1450,340 1500,330 1500,580 1440,580 1430,550 1350,550", "665,1275 700,1255 938,1252 938,1298 1210,1298 1210,1342 1200,1375 1075,1375 1075,1342 870,1342 870,1298 680,1298", "770,1170 820,1120 860,1150 858,1205 820,1215 765,1200", "1345,1070 1413,1068 1415,1115 1483,1115 1483,1158 1350,1158", "1476,1005 1500,1005 1500,1042 1476,1042", "962,1158 985,1145 1008,1158 985,1172", "937,1480 1007,1480 1007,1525 937,1525", "40,1500 70,1520 160,1480 255,1480 255,1568 120,1568 115,1520", "530,1390 640,1395 650,1425 600,1470 610,1520 590,1568 470,1568 460,1530 530,1500", "1480,1530 1500,1530 1500,1568 1480,1568"],
      forest: ["560,1410 640,1400 640,1425 580,1430", "530,1470 600,1475 600,1495 540,1490", "750,1110 775,1108 765,1120", "785,1090 803,1088 795,1105"],
      lakes: ["110,515 180,495 200,510 200,528 120,530", "240,540 285,560 265,572", "768,1045 780,1039 795,1050 780,1060"],
      rivers: ["0,975 150,985 240,1030 320,1110 450,1190 590,1275"],
      roads: ["0,590 130,605 160,650 230,670 280,675 350,700 420,700", "590,665 625,625 700,625 760,642 830,640", "855,580 870,510 853,458 1030,430 1080,395 1165,358 1250,360 1340,375 1430,405 1500,413", "0,1310 130,1320 170,1300 250,1270 340,1265 450,1215 540,1218 650,1170"],
      regions: ["390,80 280,370 190,392 183,480 160,495 110,530", "0,497 130,488 160,495", "365,20 395,45", "480,78 560,82 600,70 710,20", "952,20 952,335 1015,365 1010,395 1038,430 1038,508 965,522", "955,310 1030,257 1100,252 1160,265 1250,318 1330,305 1430,315 1500,300", "160,575 200,620 235,665 280,675 275,660 370,615 410,608 520,570 680,570", "790,540 880,510 980,530 1005,555 970,580 975,600 935,640 910,690 790,680 740,705", "740,745 640,757 635,820 760,870 860,885 862,960 850,1050 835,1055 935,1230", "910,700 1030,695 1230,772 1450,757 1500,768", "1040,508 1150,517 1155,537 1200,548 1195,570", "1310,580 1380,548 1438,548", "0,650 40,665 40,700 70,730 60,755 125,760 207,797 235,775 305,757 268,712 280,675", "207,797 200,840 215,880 215,940 260,990 225,1095 280,1135 180,1145 185,1165", "180,1200 150,1215 160,1240 158,1290 135,1320 195,1380 155,1415 190,1470", "0,1020 60,1060 225,1100", "260,990 330,988 470,1015 560,1065 565,1080 610,1090 615,1070 690,1070 760,1010 800,975 850,965", "0,1225 60,1240 160,1242", "440,1220 390,1265 405,1310 430,1340 440,1410", "680,1360 665,1420 660,1480 580,1520", "690,1355 750,1400 760,1440 750,1470 820,1490", "820,1520 910,1568", "1230,1150 1345,1112 1355,1145 1400,1160 1430,1210 1500,1257", "1500,1320 1470,1340 1480,1390 1440,1375 1310,1410 1330,1435 1240,1437 1240,1490 1180,1568", "1240,1490 1320,1530 1325,1568", "65,1520 60,1568"],
      borders: ["0,1470 70,1515 165,1480 240,1455 400,1435 560,1425 570,1405 650,1355", "690,1310 625,1275 690,1250 920,1240 1065,1220 1080,1200 1130,1180 1180,1150 1260,1090 1335,1060 1400,1020 1410,955 1500,915", "1500,488 1460,500 1438,545 1465,580 1500,583"],
      labels: [
        ["Tchad", 358, 563, 75, "country"], ["تشاد", 595, 735, 75, "country"], ["Ati أتي", 400, 568, 459, "town"],
        ["Bokoro", 33, 235, 567, "town"], ["بوكورو", 62, 206, 615, "town"], ["Mangalmé", 683, 980, 569, "town"],
        ["مانكالمي", 727, 937, 615, "town"], ["Mongo", 357, 553, 658, "town"], ["مونقو", 422, 553, 705, "town"],
        ["Aboudéïa", 607, 872, 738, "town"], ["أبو ضياء", 645, 835, 785, "town"], ["Melfi", 400, 537, 886, "town"],
        ["Bousso", 65, 268, 971, "town"], ["بوسو", 65, 182, 1020, "town"], ["Chinguil", 540, 770, 1012, "town"],
        ["شنقيل", 575, 735, 1060, "town"], ["Koumra", 158, 378, 1205, "town"], ["قمرة", 215, 320, 1250, "town"],
        ["Haraze", 1090, 1280, 1122, "town"], ["حراز", 1138, 1228, 1170, "town"], ["Maro مارو", 472, 728, 1345, "town"],
        ["Moïssala", 207, 447, 1418, "town"], ["مويسالا", 238, 415, 1467, "town"], ["Guéréda", 1390, 1660, 280, "town"],
        ["قريدا", 1437, 1560, 325, "town"], ["Abdi أبدي", 1170, 1418, 601, "town"], ["Wadi Fira", 1197, 1445, 140, "region"],
        ["وادي فيرا", 1213, 1425, 190, "region"], ["Batha البطحة", 475, 805, 259, "region"], ["Ouaddaï", 1170, 1400, 410, "region"],
        ["وداي", 1227, 1340, 460, "region"], ["Sila سيلا", 1235, 1448, 716, "region"], ["Guéra قيرا", 290, 550, 815, "region"],
        ["Salamat", 1022, 1242, 949, "region"], ["سلامات", 1038, 1225, 997, "region"], ["Moyen-Chari", 462, 798, 1188, "region"],
        ["شاري الأوسط", 470, 787, 1237, "region"], ["Bamingui-", 957, 1230, 1356, "region"], ["Bangoran", 963, 1225, 1403, "region"],
        ["Nana-Grébizi", 562, 910, 1540, "region"],
      ],
      dots: [[486, 474], [132, 628], [834, 633], [575, 664], [738, 800], [372, 873], [41, 978], [654, 962], [269, 1266], [1181, 1078], [600, 1361], [330, 1373], [1296, 548], [1500, 230]],
    },
  ];

  // outline of Nigeria, as [tile index, points] in clockwise order
  const outline = [
    [2, "1255,648 1290,630 1342,576 1428,558 1487,569 1560,564"],
    [4, "0,564 30,533 68,521 238,594 278,581 297,588 370,652 418,724 462,778 505,773 542,738 562,749 604,744 700,684 780,690 864,755 905,762 938,797 1018,822 1030,828 1208,826 1255,768 1310,718 1345,702 1430,696 1475,672 1560,672"],
    [6, "0,445 140,445 200,462 240,467 320,497 330,490 385,500 400,502 415,492 435,480 440,465 490,450 500,440 525,423 540,425 565,413 605,417 630,400 655,381 738,386 790,435 850,490 860,510 882,600 878,622 893,632 955,633 985,655 1015,670 1002,685 1008,705 998,738 978,752 1008,775 990,792 947,803 940,813 878,840 822,828 800,862 745,895 742,910 705,948 705,980 697,985 690,1030 625,1063 635,1075 618,1085 637,1105 618,1153 575,1158 515,1183 528,1188 522,1248 498,1268 505,1288 480,1300 475,1312 445,1325 413,1322 390,1352 345,1355 353,1400 343,1415 343,1440 297,1475 290,1495 295,1518 245,1547 225,1570 225,1620"],
    [3, "877,1300 877,1194 878,1155 888,1150 888,1128 870,1110 875,1055 861,1025 877,950 865,885 877,870 877,840 868,780 887,733 882,703 910,702 930,690 965,695 973,685 990,632 985,588 1015,552 1020,540 1043,522 1032,508 1060,480 1100,472 1130,398 1104,367 1117,323 1160,323 1178,275 1178,245 1152,215 1160,190 1140,130 1122,130 1108,105 1080,85 1083,0"],
    [2, "1084,1145 1128,1112 1117,1095 1128,1060 1117,1015 1123,910 1222,812 1254,750"],
  ];

  const areas = ["savanna", "sand", "meadow", "grass", "park", "forest", "lakes"];
  const lines = ["rivers", "roads", "regions", "borders"];

  function project(tile, points) {
    return points
      .split(" ")
      .map((point) => {
        const [x, y] = point.split(",").map(Number);
        return `${(tile.x + x * tile.sx).toFixed(1)},${(tile.y + y * tile.sy).toFixed(1)}`;
      })
      .join(" ");
  }

  function layer(name) {
    return tiles.flatMap((tile) => (tile[name] || []).map((p) => project(tile, p)));
  }

  const nigeria = outline.map(([i, points]) => project(tiles[i], points)).join(" ");

  const labels = tiles.flatMap((tile) =>
    tile.labels.map(([text, x0, x1, y, kind]) => ({
      text,
      kind,
      x: tile.x + x0 * tile.sx,
      y: tile.y + y * tile.sy,
      width: (x1 - x0) * tile.sx,
    }))
  );

  const dots = tiles.flatMap((tile) =>
    tile.dots.map(([x, y, r = 4, capital = false]) => ({
      x: tile.x + x * tile.sx,
      y: tile.y + y * tile.sy,
      r,
      capital,
    }))
  );

  let query = "";
</script>

<div class="page">
  <header>
    <a class="logo" href="#home" aria-label="Gosi">
      <svg width="70" height="106" viewBox="90 76 210 318">
        <rect x="92" y="110" width="44" height="88" fill="#fbc21d" />
        <rect x="144" y="78" width="45" height="120" fill="#41464f" />
        <rect x="196" y="131" width="44" height="67" fill="#fbc21d" />
        <rect x="248" y="100" width="45" height="98" fill="#41464f" />
        <path d="M93 205H130A63 65 0 0 0 247 240H195V205H292A99.500 101 0 0 1 93 205Z" />
        <text x="89" y="387" textLength="208" lengthAdjust="spacingAndGlyphs">G<tspan class="gold">o</tspan>si</text>
      </svg>
    </a>
    <a class="nav-link" href="#about">About us</a>
    <button class="explore">Explore Gosi</button>
  </header>

  <section class="hero">
    <h1>Socioeconomic data about Nigeria at<br />your fingertips</h1>
    <p>
      Explore using our interactive map, important information and data about your nation,<br />
      region or locality.
    </p>
    <form on:submit|preventDefault>
      <svg class="search-icon" width="36" height="36" viewBox="0 0 36 36">
        <circle cx="17" cy="17" r="14.200" />
        <path d="M29.500 30.500L33 34.500" />
      </svg>
      <input type="text" placeholder="Search for a location e.g Lagos" bind:value={query} />
      <button>Search</button>
    </form>
  </section>

  <svg class="map" width="2560" height="778" viewBox="370 1110 2560 778">
    <defs>
      <pattern id="reserve" width="4" height="4" patternUnits="userSpaceOnUse">
        <rect x="0" y="0" width="1" height="1" />
        <rect x="2" y="2" width="1" height="1" />
      </pattern>
    </defs>
    <polygon class="country-fill" points={nigeria} />
    {#each areas as name}
      <g class={name}>
        {#each layer(name) as points}
          <polygon {points} />
        {/each}
      </g>
    {/each}
    <g class="reserves">
      {#each layer("forest") as points}
        <polygon {points} />
      {/each}
    </g>
    {#each lines as name}
      <g class={name}>
        {#each layer(name) as points}
          <polyline {points} />
        {/each}
      </g>
    {/each}
    <polygon class="shadow-line" points={nigeria} />
    {#each dots as dot}
      <circle class="dot" class:big={dot.r === 6} cx={dot.x} cy={dot.y} r={dot.r} />
      {#if dot.capital}
        <circle cx={dot.x} cy={dot.y} r="2.500" fill="#555" />
      {/if}
    {/each}
    {#each labels as label}
      <text
        class={label.kind}
        x={label.x}
        y={label.y}
        textLength={label.width}
        lengthAdjust="spacingAndGlyphs">{label.text}</text>
    {/each}
    <g class="states">
      <polygon points={nigeria} />
      {#each layer("states") as points}
        <polyline {points} />
      {/each}
    </g>
  </svg>

  <div class="scrollbar"><div class="thumb"></div></div>
</div>

<style>
  :global(body) {
    margin: 0;
    background: #fefefe;
    overflow: hidden;
  }
  .page {
    width: 2560px;
    height: 1888px;
    margin-left: 370px;
    overflow: hidden;
    font-family: Inter, "Liberation Sans", sans-serif;
    font-feature-settings: "cv11", "ss03";
    color: #000;
  }
  header {
    display: flex;
    justify-content: space-between;
    align-items: center;
    padding: 26px 0;
    height: 104px;
  }
  .logo {
    width: 270px;
    height: 106px;
  }
  .logo svg {
    overflow: visible;
  }
  .logo text {
    font-family: Lato, "Open Sans", sans-serif;
    font-weight: 300;
    font-size: 100px;
    stroke: #000;
    stroke-width: 2px;
  }
  .logo .gold {
    fill: #fbc21d;
    stroke: #fbc21d;
    stroke-width: 4px;
  }
  .nav-link {
    color: #000;
    text-decoration: none;
    font-size: 32px;
    letter-spacing: 0.4px;
  }
  button {
    border: none;
    background: #fbc21d;
    color: #000;
    font-family: inherit;
    font-feature-settings: inherit;
    cursor: pointer;
  }
  .explore {
    width: 296px;
    height: 104px;
    padding: 2px 0 0;
    border-radius: 16px;
    font-size: 28px;
    font-weight: 500;
  }
  .hero {
    display: flex;
    flex-direction: column;
    align-items: center;
    padding-top: 129px;
    text-align: center;
  }
  h1 {
    margin: 0;
    font-size: 96px;
    line-height: 96px;
    font-weight: 500;
    letter-spacing: 1.1px;
    word-spacing: 0.5px;
    white-space: nowrap;
  }
  h1 br + * {
    letter-spacing: 0;
  }
  p {
    margin: 62px 0 0;
    font-size: 36px;
    line-height: 56px;
    letter-spacing: 0.4px;
    color: #3f4552;
    white-space: nowrap;
  }
  form {
    display: flex;
    align-items: center;
    box-sizing: border-box;
    width: 1312px;
    height: 172px;
    margin: 127px 0 160px;
    padding: 0 16px 0 35px;
    border-radius: 20px;
    background: #fff;
    box-shadow: 0 4px 50px rgba(60, 50, 20, 0.05);
  }
  .search-icon {
    fill: none;
    stroke: #9ca3af;
    stroke-width: 3;
  }
  input {
    flex: 1;
    margin-left: 37px;
    padding: 2px 0 0;
    border: none;
    outline: none;
    background: none;
    font-family: inherit;
    font-feature-settings: inherit;
    font-size: 28px;
    font-weight: 500;
    letter-spacing: -0.55px;
  }
  input::placeholder {
    color: #9ca3af;
  }
  form button {
    width: 239px;
    height: 112px;
    border-radius: 12px;
    font-size: 32px;
    font-weight: 700;
  }
  .map {
    display: block;
    background: #f3eee8;
  }
  .country-fill {
    fill: #eae9e8;
  }
  .savanna {
    fill: #eff1da;
  }
  .sand {
    fill: #f5ecd2;
    opacity: 0.8;
  }
  .meadow {
    fill: #e0e9cd;
    opacity: 0.75;
  }
  .grass {
    fill: #d9edc0;
  }
  .park {
    fill: #d2dfc0;
    opacity: 0.9;
  }
  .forest {
    fill: #bdd8b3;
  }
  .reserves {
    fill: url(#reserve);
    opacity: 0.12;
  }
  .lakes {
    fill: #add2e0;
    opacity: 0.9;
  }
  .rivers,
  .roads,
  .regions,
  .borders,
  .states {
    fill: none;
    stroke-linejoin: round;
  }
  .rivers {
    stroke: #c3dde6;
    stroke-width: 1.6;
  }
  .roads {
    stroke: #f6d2c7;
    stroke-width: 2;
  }
  .regions {
    stroke: #cdc0d0;
    stroke-width: 2;
  }
  .borders {
    stroke: #bfa9bf;
    stroke-width: 4;
  }
  .shadow-line {
    fill: none;
    stroke: #cbbccb;
    stroke-width: 5;
  }
  .states {
    stroke: #0a64d2;
    stroke-width: 2.3;
  }
  .dot {
    fill: #fff;
    stroke: #7d7d7d;
    stroke-width: 1.5;
  }
  .dot.big {
    stroke: #939393;
    stroke-width: 2;
  }
  .map text {
    font-family: "Noto Sans", "DejaVu Sans", sans-serif;
    font-size: 20px;
    paint-order: stroke;
    stroke: rgba(255, 255, 255, 0.6);
    stroke-width: 4px;
    stroke-linejoin: round;
    fill: #45484a;
  }
  .map .town {
    font-weight: 500;
  }
  .map .city {
    font-size: 23px;
    font-weight: 500;
  }
  .map .region {
    fill: #9c7a9c;
    font-style: italic;
    font-weight: 500;
  }
  .map .country {
    fill: #94728f;
    font-size: 23px;
    font-weight: 500;
  }
  .scrollbar {
    position: fixed;
    top: 0;
    right: 0;
    width: 4px;
    height: 100%;
    background: #f0f0f0;
  }
  .thumb {
    height: 516px;
    background: #828282;
  }
</style>
